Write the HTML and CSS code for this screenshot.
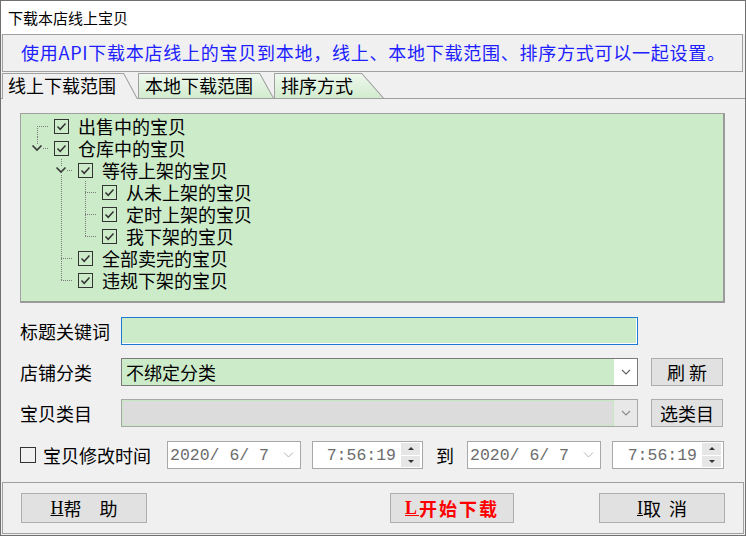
FILE: index.html
```html
<!DOCTYPE html>
<html lang="zh-CN">
<head>
    <meta charset="UTF-8">
    <title>下载本店线上宝贝</title>
    <link rel="stylesheet" href="styles.css">
</head>
<body>
    <div class="window">
        <div class="titlebar">下载本店线上宝贝</div>
        <div class="info">使用API下载本店线上的宝贝到本地，线上、本地下载范围、排序方式可以一起设置。</div>

        <!-- 选项卡 -->
        <div class="tabs">
            <div class="tab active"><div class="tab-in">线上下载范围</div></div>
            <div class="tab"><div class="tab-in">本地下载范围</div></div>
            <div class="tab tab-wide"><div class="tab-in">排序方式</div></div>
        </div>

        <div class="panel">
            <!-- 宝贝状态树 -->
            <div class="tree">
                <div class="node">
                    <span class="guide g-first"></span>
                    <svg class="check" width="15" height="15" viewBox="0 0 15 15"><rect x="0.5" y="0.5" width="14" height="14" fill="none" stroke="#333"/><polyline points="3.5,7.5 6.2,10.3 11.5,4.5" fill="none" stroke="#333" stroke-width="1.5"/></svg>
                    <span class="node-text">出售中的宝贝</span>
                </div>
                <div class="node">
                    <span class="guide g-root-last"><svg class="chev" width="12" height="8" viewBox="0 0 12 8"><polyline points="1.5,1.5 6,6 10.5,1.5" fill="none" stroke="#3a3a3a" stroke-width="1.7"/></svg></span>
                    <svg class="check" width="15" height="15" viewBox="0 0 15 15"><rect x="0.5" y="0.5" width="14" height="14" fill="none" stroke="#333"/><polyline points="3.5,7.5 6.2,10.3 11.5,4.5" fill="none" stroke="#333" stroke-width="1.5"/></svg>
                    <span class="node-text">仓库中的宝贝</span>
                </div>
                <div class="node">
                    <span class="guide"></span>
                    <span class="guide g-exp-mid"><svg class="chev" width="12" height="8" viewBox="0 0 12 8"><polyline points="1.5,1.5 6,6 10.5,1.5" fill="none" stroke="#3a3a3a" stroke-width="1.7"/></svg></span>
                    <svg class="check" width="15" height="15" viewBox="0 0 15 15"><rect x="0.5" y="0.5" width="14" height="14" fill="none" stroke="#333"/><polyline points="3.5,7.5 6.2,10.3 11.5,4.5" fill="none" stroke="#333" stroke-width="1.5"/></svg>
                    <span class="node-text">等待上架的宝贝</span>
                </div>
                <div class="node">
                    <span class="guide"></span>
                    <span class="guide g-line"></span>
                    <span class="guide g-tee"></span>
                    <svg class="check" width="15" height="15" viewBox="0 0 15 15"><rect x="0.5" y="0.5" width="14" height="14" fill="none" stroke="#333"/><polyline points="3.5,7.5 6.2,10.3 11.5,4.5" fill="none" stroke="#333" stroke-width="1.5"/></svg>
                    <span class="node-text">从未上架的宝贝</span>
                </div>
                <div class="node">
                    <span class="guide"></span>
                    <span class="guide g-line"></span>
                    <span class="guide g-tee"></span>
                    <svg class="check" width="15" height="15" viewBox="0 0 15 15"><rect x="0.5" y="0.5" width="14" height="14" fill="none" stroke="#333"/><polyline points="3.5,7.5 6.2,10.3 11.5,4.5" fill="none" stroke="#333" stroke-width="1.5"/></svg>
                    <span class="node-text">定时上架的宝贝</span>
                </div>
                <div class="node">
                    <span class="guide"></span>
                    <span class="guide g-line"></span>
                    <span class="guide g-ell"></span>
                    <svg class="check" width="15" height="15" viewBox="0 0 15 15"><rect x="0.5" y="0.5" width="14" height="14" fill="none" stroke="#333"/><polyline points="3.5,7.5 6.2,10.3 11.5,4.5" fill="none" stroke="#333" stroke-width="1.5"/></svg>
                    <span class="node-text">我下架的宝贝</span>
                </div>
                <div class="node">
                    <span class="guide"></span>
                    <span class="guide g-tee"></span>
                    <svg class="check" width="15" height="15" viewBox="0 0 15 15"><rect x="0.5" y="0.5" width="14" height="14" fill="none" stroke="#333"/><polyline points="3.5,7.5 6.2,10.3 11.5,4.5" fill="none" stroke="#333" stroke-width="1.5"/></svg>
                    <span class="node-text">全部卖完的宝贝</span>
                </div>
                <div class="node">
                    <span class="guide"></span>
                    <span class="guide g-ell"></span>
                    <svg class="check" width="15" height="15" viewBox="0 0 15 15"><rect x="0.5" y="0.5" width="14" height="14" fill="none" stroke="#333"/><polyline points="3.5,7.5 6.2,10.3 11.5,4.5" fill="none" stroke="#333" stroke-width="1.5"/></svg>
                    <span class="node-text">违规下架的宝贝</span>
                </div>
            </div>

            <!-- 条件 -->
            <div class="form">
                <span class="field-label">标题关键词</span>
                <div class="textbox focus"></div>

                <span class="field-label">店铺分类</span>
                <div class="combo">
                    <div class="combo-text">不绑定分类</div>
                    <div class="combo-btn"><svg width="10" height="6" viewBox="0 0 10 6"><polyline points="1,1 5,5 9,1" fill="none" stroke="#606060" stroke-width="1.1"/></svg></div>
                </div>
                <div class="btn side-btn">刷 新</div>

                <span class="field-label">宝贝类目</span>
                <div class="combo disabled">
                    <div class="combo-text"></div>
                    <div class="combo-btn"><svg width="10" height="6" viewBox="0 0 10 6"><polyline points="1,1 5,5 9,1" fill="none" stroke="#8a8a8a" stroke-width="1.1"/></svg></div>
                </div>
                <div class="btn side-btn">选类目</div>
            </div>

            <div class="date-row">
                <span class="box-check"></span>
                <span class="date-label">宝贝修改时间</span>
                <div class="datebox">
                    <span class="mono">2020/ 6/ 7</span>
                    <svg class="date-chev" width="11" height="6" viewBox="0 0 11 6"><polyline points="1,0.5 5.5,5 10,0.5" fill="none" stroke="#b4b4b4" stroke-width="1"/></svg>
                </div>
                <div class="timebox">
                    <span class="mono">7:56:19</span>
                    <div class="spin"><span><i class="up"></i></span><span><i class="down"></i></span></div>
                </div>
                <span class="to">到</span>
                <div class="datebox">
                    <span class="mono">2020/ 6/ 7</span>
                    <svg class="date-chev" width="11" height="6" viewBox="0 0 11 6"><polyline points="1,0.5 5.5,5 10,0.5" fill="none" stroke="#b4b4b4" stroke-width="1"/></svg>
                </div>
                <div class="timebox wide">
                    <span class="mono">7:56:19</span>
                    <div class="spin"><span><i class="up"></i></span><span><i class="down"></i></span></div>
                </div>
            </div>
        </div>

        <!-- 按钮 -->
        <div class="footer">
            <div class="btn big-btn"><u class="key">H</u>帮　助</div>
            <div class="btn big-btn start"><u class="key">L</u>开始下载</div>
            <div class="btn big-btn cancel"><u class="key">I</u>取&nbsp;&nbsp;消</div>
        </div>
    </div>
</body>
</html>
```

FILE: styles.css
```css
body {
    margin: 0;
    background: #ffffff;
    font-family: "Noto Sans CJK SC", "Noto Sans", sans-serif;
    color: #000;
}
.window {
    --green: #ccebc9;
    width: 746px;
    height: 536px;
    box-sizing: border-box;
    border: 1px solid #707070;
    background: #f0f0f0;
    display: flex;
    flex-direction: column;
}
.titlebar {
    flex: none;
    height: 33px;
    background: #fff;
    font-size: 15px;
    line-height: 33px;
    padding-left: 7px;
}
.info {
    flex: none;
    height: 38px;
    box-sizing: border-box;
    margin: 0 2px 0 1px;
    border: 1px solid #a0a0a0;
    color: #2020ff;
    font-size: 18px;
    line-height: 35px;
    padding-left: 18px;
    letter-spacing: 0.75px;
    white-space: nowrap;
    overflow: hidden;
}

/* 选项卡 */
.tabs {
    flex: none;
    height: 27px;
    box-sizing: border-box;
    padding: 1px 0 0 1px;
    border-bottom: 1px solid #a0a0a0;
    display: flex;
    align-items: flex-start;
}
.tab {
    width: 136px;
    height: 25px;
    box-sizing: border-box;
    padding: 1px 0 0 1px;
    background: #a0a0a0;
    clip-path: polygon(0 0, calc(100% - 14px) 0, 100% 100%, 0 100%);
}
.tab-in {
    height: 100%;
    padding-left: 6px;
    font-size: 18px;
    line-height: 23px;
    white-space: nowrap;
    background: linear-gradient(#eef8ed, #d2ecce);
    clip-path: polygon(0 0, calc(100% - 14.6px) 0, calc(100% - 1.2px) 100%, 0 100%);
}
.tab.active {
    height: 26px;
    margin-bottom: -1px;
}
.tab.active .tab-in {
    background: #f0f0f0;
    padding-left: 5px;
}
.tab-wide {
    width: 110px;
    clip-path: polygon(0 0, calc(100% - 22px) 0, 100% 100%, 0 100%);
}
.tab-wide .tab-in {
    clip-path: polygon(0 0, calc(100% - 22.4px) 0, calc(100% - 1.3px) 100%, 0 100%);
}

.panel {
    flex: 1;
    padding: 14px 0 0 19px;
}

/* 树 */
.tree {
    width: 705px;
    height: 190px;
    box-sizing: border-box;
    border: 1px solid #a0a0a0;
    border-right: 2px solid #9a9a9a;
    border-bottom: 2px solid #9a9a9a;
    background: var(--green);
    padding: 1px 0 0 4px;
}
.node {
    display: flex;
    align-items: center;
    height: 22px;
}
.guide {
    --v: repeating-linear-gradient(to bottom, #7c7c7c 0 1px, transparent 1px 2px);
    --h: repeating-linear-gradient(to right, #7c7c7c 0 1px, transparent 1px 2px);
    flex: none;
    width: 24px;
    height: 22px;
    display: flex;
    align-items: center;
    justify-content: center;
}
.g-first {
    background: var(--v) 12px 11px / 1px 11px no-repeat, var(--h) 12px 11px / 12px 1px no-repeat;
}
.g-root-last {
    background: var(--v) 12px 0 / 1px 11px no-repeat, var(--h) 18px 11px / 6px 1px no-repeat;
}
.g-exp-mid {
    background: var(--v) 12px 0 / 1px 22px no-repeat, var(--h) 18px 11px / 6px 1px no-repeat;
}
.g-line {
    background: var(--v) 12px 0 / 1px 22px no-repeat;
}
.g-tee {
    background: var(--v) 12px 0 / 1px 22px no-repeat, var(--h) 12px 11px / 12px 1px no-repeat;
}
.g-ell {
    background: var(--v) 12px 0 / 1px 12px no-repeat, var(--h) 12px 11px / 12px 1px no-repeat;
}
.chev {
    background: var(--green);
    margin-left: -1px;
}
.check {
    flex: none;
    margin-left: 5px;
}
.node-text {
    display: block;
    height: 22px;
    margin-left: 9px;
    font-size: 18px;
    line-height: 22px;
    white-space: nowrap;
}

/* 条件 */
.form {
    display: grid;
    grid-template-columns: 101px 517px 13px 72px;
    grid-auto-rows: 28px;
    row-gap: 13px;
    margin-top: 14px;
    align-items: stretch;
}
.field-label {
    grid-column: 1;
    font-size: 18px;
    line-height: 28px;
    white-space: nowrap;
}
.textbox {
    grid-column: 2;
    box-sizing: border-box;
    border: 1px solid #1c7ad6;
    box-shadow: inset -1px -1px 0 #ffffff;
    background: var(--green);
}
.combo {
    grid-column: 2;
    display: flex;
    box-sizing: border-box;
    border: 1px solid #7a7a7a;
    background: #fff;
}
.combo-text {
    flex: 1;
    background: var(--green);
    font-size: 18px;
    line-height: 26px;
    padding-left: 4px;
}
.combo-btn {
    width: 23px;
    display: flex;
    align-items: center;
    justify-content: center;
}
.combo.disabled {
    border-color: #a8a8a8;
    background: #e8e8e8;
}
.combo.disabled .combo-text {
    background: #dcdcdc;
    border: 1px solid #c4e8c0;
}
.btn {
    box-sizing: border-box;
    border: 1px solid #adadad;
    background: #e1e1e1;
    display: flex;
    align-items: center;
    justify-content: center;
    font-size: 18px;
    white-space: nowrap;
}
.side-btn {
    grid-column: 4;
    height: 28px;
}

.date-row {
    display: flex;
    align-items: center;
    height: 28px;
    margin-top: 14px;
}
.box-check {
    flex: none;
    width: 16px;
    height: 16px;
    box-sizing: border-box;
    border: 1px solid #333;
    margin-right: 7px;
}
.date-label {
    width: 124px;
    font-size: 18px;
    line-height: 28px;
    white-space: nowrap;
}
.mono {
    font-family: "Liberation Mono", monospace;
    font-size: 16.5px;
    color: #6d6d6d;
    white-space: pre;
}
.datebox {
    width: 134px;
    height: 28px;
    box-sizing: border-box;
    border: 1px solid #a8a8a8;
    background: #fff;
    display: flex;
    align-items: center;
    padding-left: 2px;
}
.date-chev {
    margin-left: auto;
    margin-right: 6px;
}
.timebox {
    width: 111px;
    height: 28px;
    box-sizing: border-box;
    margin-left: 11px;
    border: 1px solid #a8a8a8;
    background: #fff;
    display: flex;
    align-items: center;
    justify-content: flex-end;
}
.timebox.wide {
    width: 112px;
}
.timebox .mono {
    margin-right: 5px;
}
.spin {
    width: 19px;
    height: 24px;
    margin-right: 2px;
    display: flex;
    flex-direction: column;
    gap: 1px;
}
.spin span {
    flex: 1;
    background: #e6e6e6;
    display: flex;
    align-items: center;
    justify-content: center;
}
.spin i {
    width: 0;
    height: 0;
    border-left: 3px solid transparent;
    border-right: 3px solid transparent;
}
.spin .up {
    border-bottom: 3px solid #333;
}
.spin .down {
    border-top: 3px solid #333;
}
.to {
    width: 44px;
    text-align: center;
    font-size: 18px;
    line-height: 28px;
}

/* 底部按钮 */
.footer {
    flex: none;
    height: 52px;
    box-sizing: border-box;
    margin: 2px 1px 1px 1px;
    border: 1px solid #a0a0a0;
    padding: 10px 18px 0 18px;
    display: flex;
    align-items: flex-start;
}
.big-btn {
    width: 126px;
    height: 30px;
}
.key {
    font-family: "Liberation Serif", serif;
    font-size: 18px;
}
.start {
    width: 124px;
    margin-left: 243px;
    color: #ff0000;
    font-weight: bold;
    letter-spacing: 2px;
}
.cancel {
    margin-left: auto;
}
```
